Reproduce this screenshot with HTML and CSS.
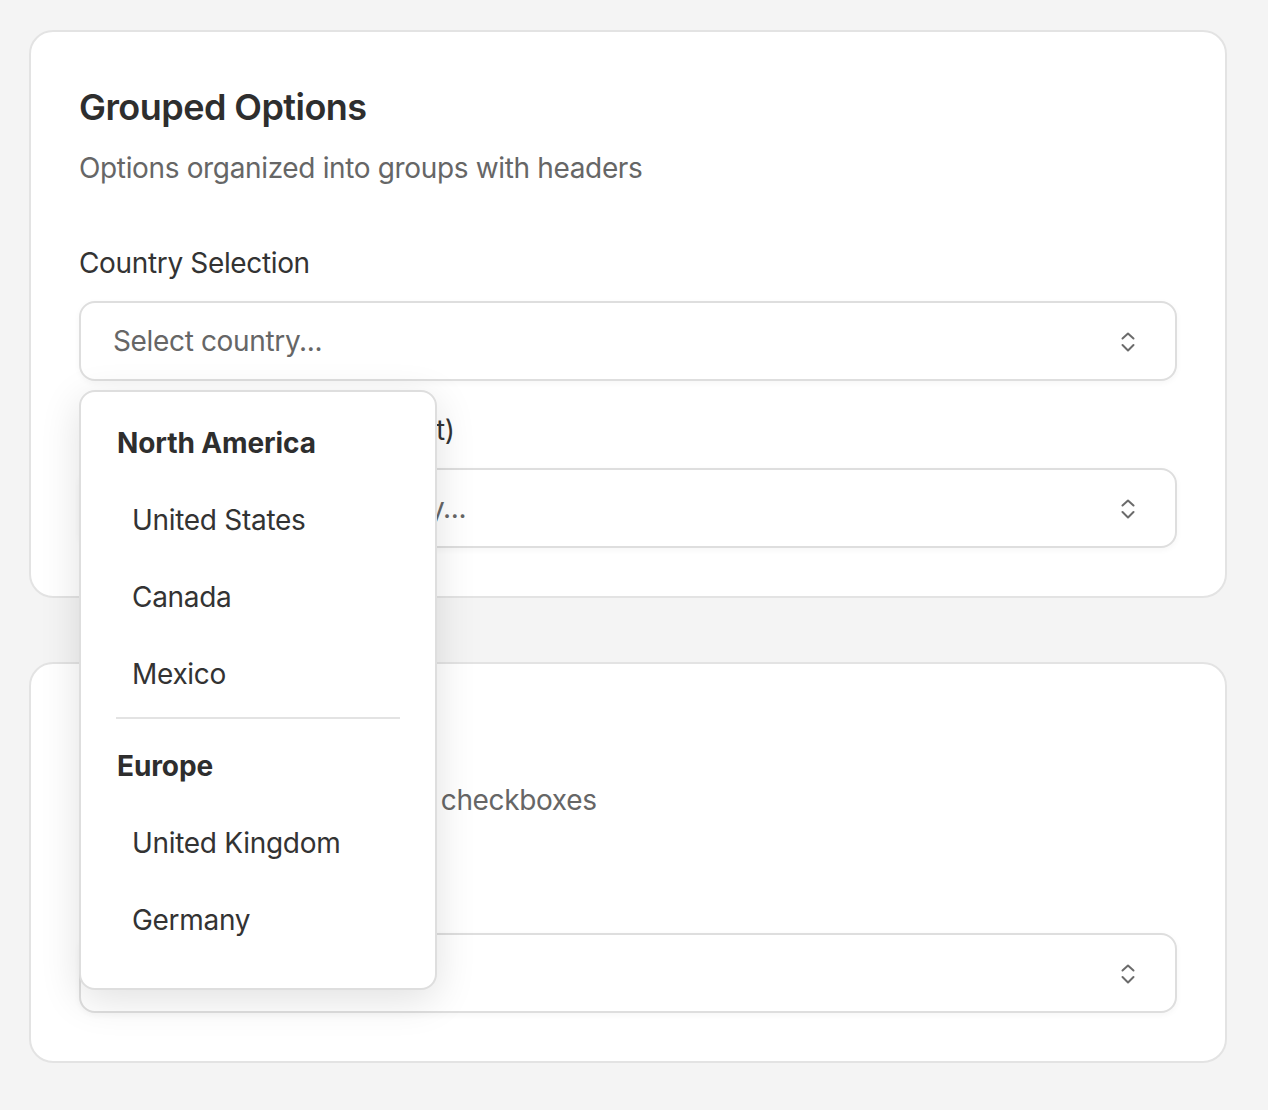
FILE: index.html
```html
<!DOCTYPE html>
<html lang="en">
<head>
<meta charset="utf-8">
<title>Grouped Options</title>
<link rel="stylesheet" href="styles.css">
</head>
<body>
<div class="page">
  <section class="card">
    <h2 class="card-title">Grouped Options</h2>
    <p class="card-desc">Options organized into groups with headers</p>
    <div class="fields">
      <div class="field">
        <label class="field-label">Country Selection</label>
        <div class="select-wrap">
          <div class="select">
            <span class="placeholder">Select country...</span>
            <svg class="chevrons" width="14" height="20" viewBox="0 0 14 20" aria-hidden="true"><path d="M1.5 6.5 L7 1.5 L12.5 6.5 M1.5 13 L7 18.5 L12.5 13" fill="none" stroke="#6b6b6b" stroke-width="2" stroke-linecap="round" stroke-linejoin="round"/></svg>
          </div>
          <div class="dropdown">
            <div class="group-header">North America</div>
            <div class="option">United States</div>
            <div class="option">Canada</div>
            <div class="option">Mexico</div>
            <div class="separator"></div>
            <div class="group-header">Europe</div>
            <div class="option">United Kingdom</div>
            <div class="option">Germany</div>
          </div>
        </div>
      </div>
      <div class="field">
        <label class="field-label">Country Selection (Compact)</label>
        <div class="select-wrap">
          <div class="select">
            <span class="placeholder">Select a favourite country...</span>
            <svg class="chevrons" width="14" height="20" viewBox="0 0 14 20" aria-hidden="true"><path d="M1.5 6.5 L7 1.5 L12.5 6.5 M1.5 13 L7 18.5 L12.5 13" fill="none" stroke="#6b6b6b" stroke-width="2" stroke-linecap="round" stroke-linejoin="round"/></svg>
          </div>
        </div>
      </div>
    </div>
  </section>
  <section class="card">
    <h2 class="card-title">Multi-Select</h2>
    <p class="card-desc">Select multiple options with checkboxes</p>
    <div class="fields">
      <div class="field">
        <label class="field-label">Frameworks</label>
        <div class="select-wrap">
          <div class="select">
            <span class="placeholder">Select frameworks...</span>
            <svg class="chevrons" width="14" height="20" viewBox="0 0 14 20" aria-hidden="true"><path d="M1.5 6.5 L7 1.5 L12.5 6.5 M1.5 13 L7 18.5 L12.5 13" fill="none" stroke="#6b6b6b" stroke-width="2" stroke-linecap="round" stroke-linejoin="round"/></svg>
          </div>
        </div>
      </div>
    </div>
  </section>
</div>
</body>
</html>
```
FILE: styles.css
```css
body {
  margin: 0;
  background: #f4f4f4;
  font-family: Inter, "Noto Sans", sans-serif;
  color: #333;
}

.page {
  padding: 30px 0 48px 29px;
  display: flex;
  flex-direction: column;
  gap: 64px;
}

.card {
  width: 1198px;
  box-sizing: border-box;
  background: #fff;
  border: 2px solid #e3e3e3;
  border-radius: 24px;
  padding: 48px;
}

.card-title {
  margin: 0;
  font-size: 36px;
  line-height: 54px;
  font-weight: 600;
  letter-spacing: -0.55px;
  color: #2e2e2e;
}

.card-desc {
  margin: 13px 0 0;
  font-size: 28px;
  line-height: 42px;
  letter-spacing: -0.35px;
  color: #666;
}

.fields {
  margin-top: 53px;
  display: flex;
  flex-direction: column;
  gap: 28px;
}

.field {
  display: flex;
  flex-direction: column;
  gap: 17px;
}

.field-label {
  font-size: 28px;
  line-height: 42px;
  letter-spacing: -0.35px;
  color: #333;
}

.select-wrap {
  position: relative;
}

.select {
  height: 80px;
  box-sizing: border-box;
  border: 2px solid #dedede;
  border-radius: 16px;
  background: #fff;
  padding: 0 40px 0 32px;
  display: flex;
  align-items: center;
  justify-content: space-between;
  box-shadow: 0 2px 6px rgba(0, 0, 0, 0.04);
}

.placeholder {
  font-size: 28px;
  letter-spacing: -0.35px;
  color: #666;
}

.chevrons {
  display: block;
  margin-top: 1px;
}

.dropdown {
  position: absolute;
  z-index: 10;
  top: calc(100% + 9px);
  left: 0;
  width: 358px;
  box-sizing: border-box;
  background: #fff;
  border: 2px solid #dedede;
  border-radius: 16px;
  padding: 12px 16px 30px;
  box-shadow: 0 10px 40px rgba(0, 0, 0, 0.12);
}

.group-header {
  height: 77px;
  padding: 0 20px;
  display: flex;
  align-items: center;
  font-size: 28px;
  font-weight: 700;
  letter-spacing: -0.1px;
  color: #2e2e2e;
}

.option {
  height: 77px;
  padding: 0 35px;
  display: flex;
  align-items: center;
  font-size: 28px;
  letter-spacing: -0.3px;
  color: #333;
}

.separator {
  height: 2px;
  background: #e3e3e3;
  margin: 5px 19px 8px;
}
```
